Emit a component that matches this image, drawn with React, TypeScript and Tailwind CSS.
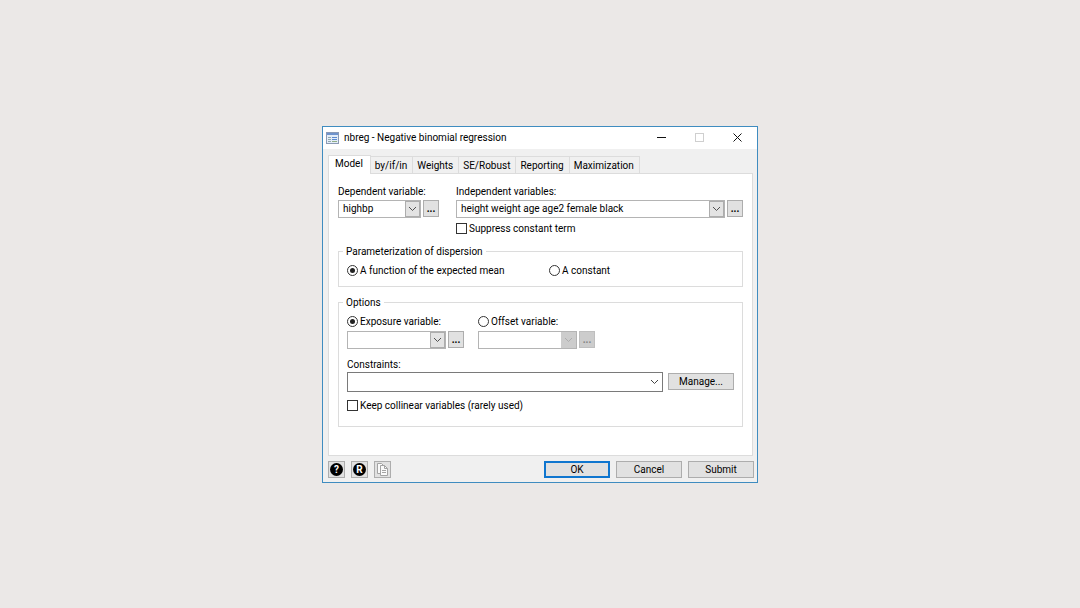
import { useState } from "react";
import type { ReactNode } from "react";
import clsx from "clsx";

const TABS = ["Model", "by/if/in", "Weights", "SE/Robust", "Reporting", "Maximization"];

const PUSH_BUTTON =
  "h-[17px] w-[66px] shrink-0 border border-[#adadad] bg-[#e1e1e1] text-center leading-[15px]";

function FormIcon() {
  return (
    <svg width="13" height="12" viewBox="0 0 13 12" aria-hidden="true">
      <rect x="0.5" y="0.5" width="12" height="11" fill="#e4edf8" stroke="#8b9ab5" />
      <rect x="1" y="1" width="11" height="2" fill="#6f93cc" />
      <path d="M2 5.5h3M2 7.5h3M2 9.5h3" stroke="#93a9ad" />
      <path d="M6 5.5h5M6 7.5h5" stroke="#5c8ad0" />
      <path d="M6 9.5h5" stroke="#8fae86" />
    </svg>
  );
}

function Chevron() {
  return (
    <svg width="9" height="6" viewBox="0 0 9 6" fill="none" aria-hidden="true">
      <path d="M1 1l3.5 3.5L8 1" stroke="currentColor" />
    </svg>
  );
}

type ComboProps = {
  id: string;
  label?: string;
  value?: string;
  disabled?: boolean;
  flat?: boolean;
};

function Combo({ id, label, value = "", disabled, flat }: ComboProps) {
  return (
    <div className="relative min-w-0 flex-1">
      <select
        id={id}
        aria-label={label}
        defaultValue={value}
        disabled={disabled}
        className={clsx(
          "block w-full appearance-none border bg-white pr-5 pl-1 text-black opacity-100 outline-none",
          flat ? "h-5 border-[#7a7a7a]" : "h-[18px] border-[#b4b4b4]",
        )}
      >
        <option value={value}>{value}</option>
      </select>
      <span
        className={clsx(
          "pointer-events-none absolute inset-y-px right-px flex w-[15px] items-center justify-center",
          flat && "text-[#444]",
          !flat && !disabled && "border border-[#adadad] bg-[#e3e3e3] text-[#505050]",
          disabled && "bg-[#cccccc] text-[#adadad]",
        )}
      >
        <Chevron />
      </span>
    </div>
  );
}

function MoreButton({ label, disabled }: { label: string; disabled?: boolean }) {
  return (
    <button
      type="button"
      aria-label={label}
      disabled={disabled}
      className={clsx(
        "flex h-[17px] w-4 shrink-0 items-end justify-center border leading-[14px] font-bold",
        disabled
          ? "border-[#bfbfbf] bg-[#cccccc] text-[#838383]"
          : "border-[#adadad] bg-[#e1e1e1] text-black",
      )}
    >
      ...
    </button>
  );
}

function Check({ children }: { children: ReactNode }) {
  return (
    <label className="flex items-center gap-0.5">
      <input
        type="checkbox"
        className="size-[11px] appearance-none border border-[#333] bg-white bg-clip-content p-0.5 checked:bg-[#333]"
      />
      {children}
    </label>
  );
}

type RadioProps = {
  name: string;
  checked: boolean;
  onChange: () => void;
  children: ReactNode;
};

function Radio({ name, checked, onChange, children }: RadioProps) {
  return (
    <label className="flex items-center gap-0.5">
      <input
        type="radio"
        name={name}
        checked={checked}
        onChange={onChange}
        className="size-[11px] appearance-none rounded-full border border-[#333] bg-clip-content p-0.5 checked:bg-[#222]"
      />
      {children}
    </label>
  );
}

function TitleBar() {
  return (
    <header className="flex h-[22px] items-center bg-white pl-[3px]">
      <FormIcon />
      <h1 className="ml-[5px] flex-1">nbreg - Negative binomial regression</h1>
      <button type="button" aria-label="Minimize" className="flex h-full w-[38px] items-center justify-center">
        <svg width="9" height="9" viewBox="0 0 9 9">
          <path d="M0 4.5h9" stroke="#111" />
        </svg>
      </button>
      <button
        type="button"
        aria-label="Maximize"
        disabled
        className="flex h-full w-[38px] items-center justify-center"
      >
        <svg width="9" height="9" viewBox="0 0 9 9" fill="none">
          <rect x="0.5" y="0.5" width="8" height="8" stroke="#cfcfcf" />
        </svg>
      </button>
      <button type="button" aria-label="Close" className="flex h-full w-[39px] items-center justify-center">
        <svg width="9" height="9" viewBox="0 0 9 9" fill="none">
          <path d="M0.5 0.5l8 8M8.5 0.5l-8 8" stroke="#111" />
        </svg>
      </button>
    </header>
  );
}

function ModelPanel() {
  const [dispersion, setDispersion] = useState("mean");
  const [scale, setScale] = useState("exposure");

  return (
    <div
      role="tabpanel"
      className="border border-[#dcdcdc] bg-white px-[9px] pt-[11px] pb-[28px]"
    >
      <div className="flex gap-[17px]">
        <div className="w-[101px]">
          <label htmlFor="depvar" className="block">
            Dependent variable:
          </label>
          <div className="mt-px flex items-center gap-0.5">
            <Combo id="depvar" value="highbp" />
            <MoreButton label="Dependent variable options" />
          </div>
        </div>
        <div className="flex-1">
          <label htmlFor="indepvars" className="block">
            Independent variables:
          </label>
          <div className="mt-px mb-1 flex items-center gap-0.5">
            <Combo id="indepvars" value="height weight age age2 female black" />
            <MoreButton label="Independent variables options" />
          </div>
          <Check>Suppress constant term</Check>
        </div>
      </div>

      <fieldset className="mt-[9px] border border-[#dcdcdc] px-2 pt-[5px] pb-2">
        <legend className="-ml-1 px-[3px]">Parameterization of dispersion</legend>
        <div className="grid grid-cols-[202px_1fr]">
          <Radio name="dispersion" checked={dispersion === "mean"} onChange={() => setDispersion("mean")}>
            A function of the expected mean
          </Radio>
          <Radio
            name="dispersion"
            checked={dispersion === "constant"}
            onChange={() => setDispersion("constant")}
          >
            A constant
          </Radio>
        </div>
      </fieldset>

      <fieldset className="mt-[9px] border border-[#dcdcdc] px-2 pt-[5px] pb-[13px]">
        <legend className="-ml-1 px-[3px]">Options</legend>
        <div className="flex gap-[14px]">
          <div className="w-[117px]">
            <Radio name="scale" checked={scale === "exposure"} onChange={() => setScale("exposure")}>
              Exposure variable:
            </Radio>
            <div className="mt-0.5 flex items-center gap-0.5">
              <Combo id="exposure" label="Exposure variable" disabled={scale !== "exposure"} />
              <MoreButton label="Exposure variable options" disabled={scale !== "exposure"} />
            </div>
          </div>
          <div className="w-[117px]">
            <Radio name="scale" checked={scale === "offset"} onChange={() => setScale("offset")}>
              Offset variable:
            </Radio>
            <div className="mt-0.5 flex items-center gap-0.5">
              <Combo id="offset" label="Offset variable" disabled={scale !== "offset"} />
              <MoreButton label="Offset variable options" disabled={scale !== "offset"} />
            </div>
          </div>
        </div>
        <label htmlFor="constraints" className="mt-[9px] block">
          Constraints:
        </label>
        <div className="mb-[7px] flex items-center gap-[5px]">
          <Combo id="constraints" flat />
          <button type="button" className={PUSH_BUTTON}>
            Manage...
          </button>
        </div>
        <Check>Keep collinear variables (rarely used)</Check>
      </fieldset>
    </div>
  );
}

function Footer() {
  const iconButton =
    "flex size-[17px] items-center justify-center border border-[#adadad] bg-[#e1e1e1]";
  const badge =
    "flex size-[13px] items-center justify-center rounded-full bg-black pt-px leading-3 font-bold text-white";
  return (
    <footer className="flex items-center gap-1.5 pt-[5px] pr-[3px] pb-1 pl-[5px]">
      <button type="button" aria-label="Help" className={iconButton}>
        <span className={badge}>?</span>
      </button>
      <button type="button" aria-label="Reset" className={iconButton}>
        <span className={badge}>R</span>
      </button>
      <button type="button" aria-label="Copy command" className={iconButton}>
        <svg width="13" height="13" viewBox="0 0 13 13" fill="#fafafa" stroke="#a3a3a3">
          <path d="M4 10.5H1.5v-10h4l2 2" />
          <path d="M4.5 2.5h4l3 3v7h-7z" />
          <path d="M8.5 2.5v3h3M6 7.5h4M6 9.5h4" fill="none" />
        </svg>
      </button>
      <div className="flex flex-1 justify-end gap-1.5">
        <button
          type="button"
          className="h-[17px] w-[66px] border-2 border-[#0f76cf] bg-[#e1e1e1] text-center leading-[14px]"
        >
          OK
        </button>
        <button type="button" className={PUSH_BUTTON}>
          Cancel
        </button>
        <button type="button" className={PUSH_BUTTON}>
          Submit
        </button>
      </div>
    </footer>
  );
}

export default function App() {
  const [active, setActive] = useState("Model");

  return (
    <div className="flex min-h-screen items-center justify-center bg-[#ebe8e7] font-['Roboto','Open_Sans',sans-serif] text-[10px] leading-[14px] text-black">
      <main className="w-full max-w-[436px] border border-[#3f8cc0] bg-[#f0f0f0]">
        <TitleBar />
        <div className="pt-[6px] pr-1 pl-[5px]">
          <div role="tablist" className="flex items-end">
            {TABS.map((tab) => (
              <button
                key={tab}
                type="button"
                role="tab"
                aria-selected={tab === active}
                onClick={() => setActive(tab)}
                className={clsx(
                  "border-t border-r border-[#dcdcdc]",
                  tab === active
                    ? "relative -mb-px h-[19px] border-l bg-white pr-[7px] pb-0.5 pl-1.5"
                    : "h-[17px] pt-0.5 pr-[5px] pl-1",
                )}
              >
                {tab}
              </button>
            ))}
          </div>
          <ModelPanel />
        </div>
        <Footer />
      </main>
    </div>
  );
}
